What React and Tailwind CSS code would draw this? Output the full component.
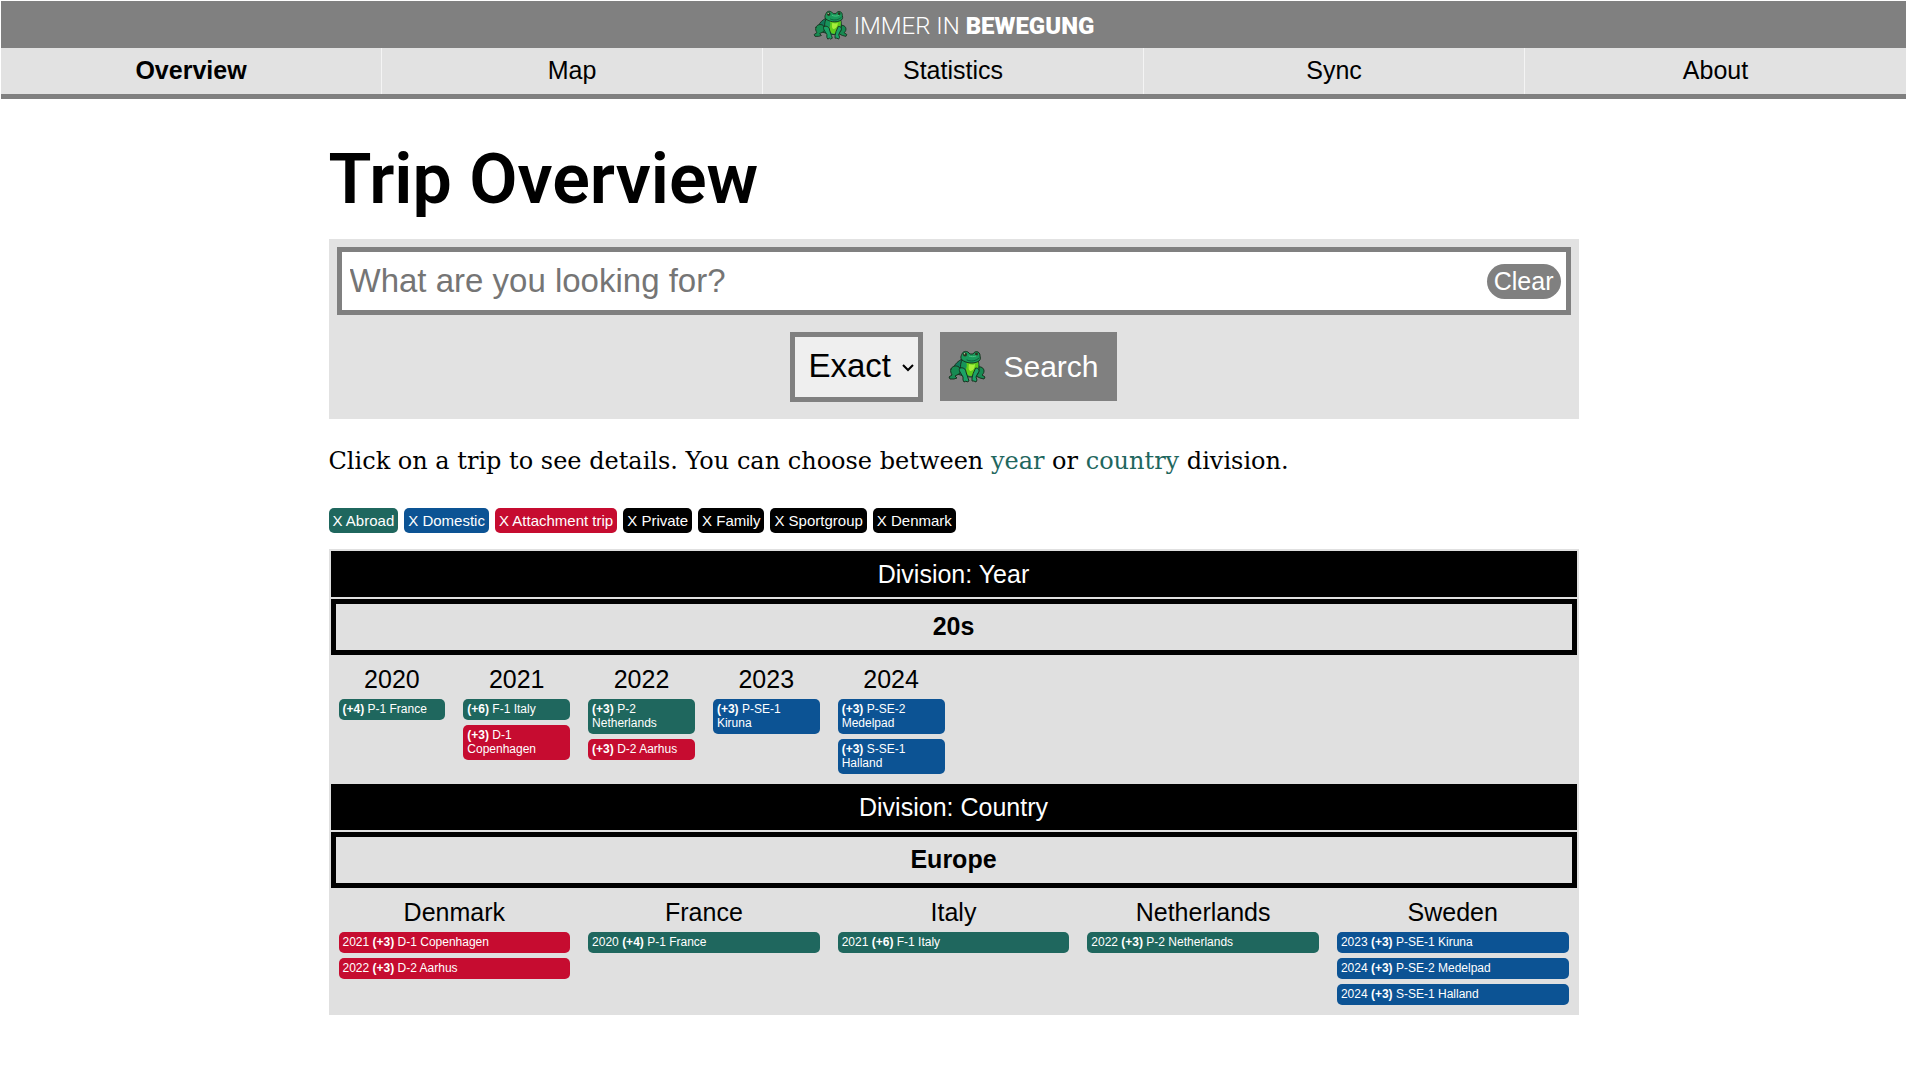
import React from "react";

const NAV = ["Overview", "Map", "Statistics", "Sync", "About"];

const TONES = {
  abroad: "bg-[#1f675e]",
  domestic: "bg-[#0c5394]",
  attachment: "bg-[#c60c30]",
  plain: "bg-black",
};

const FILTERS = [
  ["Abroad", "abroad"],
  ["Domestic", "domestic"],
  ["Attachment trip", "attachment"],
  ["Private", "plain"],
  ["Family", "plain"],
  ["Sportgroup", "plain"],
  ["Denmark", "plain"],
];

const YEARS = [
  { title: "2020", trips: [["", "(+4)", "P-1 France", "abroad"]] },
  {
    title: "2021",
    trips: [
      ["", "(+6)", "F-1 Italy", "abroad"],
      ["", "(+3)", "D-1 Copenhagen", "attachment"],
    ],
  },
  {
    title: "2022",
    trips: [
      ["", "(+3)", "P-2 Netherlands", "abroad"],
      ["", "(+3)", "D-2 Aarhus", "attachment"],
    ],
  },
  { title: "2023", trips: [["", "(+3)", "P-SE-1 Kiruna", "domestic"]] },
  {
    title: "2024",
    trips: [
      ["", "(+3)", "P-SE-2 Medelpad", "domestic"],
      ["", "(+3)", "S-SE-1 Halland", "domestic"],
    ],
  },
];

const COUNTRIES = [
  {
    title: "Denmark",
    trips: [
      ["2021", "(+3)", "D-1 Copenhagen", "attachment"],
      ["2022", "(+3)", "D-2 Aarhus", "attachment"],
    ],
  },
  { title: "France", trips: [["2020", "(+4)", "P-1 France", "abroad"]] },
  { title: "Italy", trips: [["2021", "(+6)", "F-1 Italy", "abroad"]] },
  { title: "Netherlands", trips: [["2022", "(+3)", "P-2 Netherlands", "abroad"]] },
  {
    title: "Sweden",
    trips: [
      ["2023", "(+3)", "P-SE-1 Kiruna", "domestic"],
      ["2024", "(+3)", "P-SE-2 Medelpad", "domestic"],
      ["2024", "(+3)", "S-SE-1 Halland", "domestic"],
    ],
  },
];

function Frog({ className }) {
  return (
    <svg viewBox="0 0 38 33" className={className} aria-hidden="true">
      <g stroke="#17331f" strokeWidth="1" strokeLinejoin="round" strokeLinecap="round">
        {/* back and hind legs */}
        <path fill="#117a5c" d="M14 9C10 11 7 14 6 17l3 7 7 2 4-6-2-9z" />
        <path fill="#178a52" d="M3 19c1-3 5-4 8-2 2 2 2 5 0 7l-4 2 2 2-3 1-4 0-1-2 3-2c-1-2-2-4-1-6z" />
        <path fill="#178a52" d="M29 17c4-1 7 1 7 4 0 2-1 3-2 4l3 2-1 2-4-1-4-2z" />
        {/* torso and belly */}
        <path fill="#17935a" d="M14 10c-2 4-2 9 0 13 2 3 5 4 9 4 5 0 8-3 8-8 0-3 0-6-1-9z" />
        <path
          fill="#5fcb1c"
          stroke="none"
          d="M18 12c4 1 9 1 12-1 1 4 0 8-2 11-1 3-3 4-6 4-3-1-5-3-4-7 1-3 1-5 0-7z"
        />
        <path fill="#a6ee3a" stroke="none" d="M21 14c2 1 5 1 6 0 0 3-1 6-4 7-2 0-3-2-2-7z" />
        {/* front legs */}
        <path fill="#1ba267" d="M12 18c3-1 6 1 6 4l2 6 1 3-2 1-1-1-2 1-1-2 0-3-3-5c-1-2-1-3 0-4z" />
        <path fill="#1ba267" d="M28 18c3 0 4 3 2 5l-2 4 1 3-1 2-2-1-2 0 0-3 1-4z" />
        {/* head */}
        <path
          fill="#1a9a5c"
          d="M14 10c-2-2-1-4 0-6 1-3 4-3 6-2l2 2h3c1-2 3-3 5-2 2 1 2 3 2 4 1 3 0 5-3 6-5 2-11 1-15-2z"
        />
      </g>
      <circle cx="17" cy="4.500" r="2" fill="#2c3320" />
      <circle cx="28.500" cy="4" r="1.500" fill="#2c3320" />
      <circle cx="16.500" cy="3.800" r="0.700" fill="#c6cfa8" />
      <path d="M19 10c4 2 9 1 12-2" fill="none" stroke="#0d5733" strokeWidth="0.900" strokeLinecap="round" />
      <path d="M21 6c2 1 5 1 7 0" fill="none" stroke="#4cc583" strokeWidth="1" strokeLinecap="round" />
    </svg>
  );
}

function Trip({ year, more, name, tone }) {
  return (
    <a
      href="#trip"
      className={`block rounded-[5px] px-1 pt-[3px] pb-1 text-[12px] leading-[14px] text-white ${TONES[tone]}`}
    >
      {year && `${year} `}
      <b>{more}</b> {name}
    </a>
  );
}

function Division({ title, group, columns, span }) {
  return (
    <section className="grid grid-cols-10 gap-[2px]">
      <h2 className="col-span-full bg-black py-2 text-center text-[25px] leading-[30px] text-white">
        Division: {title}
      </h2>
      <h3 className="col-span-full border-5 border-black pt-2 pb-2.5 text-center text-[25px] leading-[28px] font-bold">
        {group}
      </h3>
      {columns.map((column) => (
        <div key={column.title} className={`p-2 ${span}`}>
          <h4 className="mb-1.5 text-center text-[25px] leading-[28px]">{column.title}</h4>
          <div className="flex flex-col gap-[5px]">
            {column.trips.map(([year, more, name, tone]) => (
              <Trip key={year + name} year={year} more={more} name={name} tone={tone} />
            ))}
          </div>
        </div>
      ))}
    </section>
  );
}

export default function App() {
  return (
    <div className="bg-white pt-px pl-px font-['Liberation_Sans',Arial,sans-serif] text-black">
      <header>
        <div className="flex h-[47px] items-center justify-center gap-1.5 bg-[#808080] text-white">
          <Frog className="h-[30px] w-[35px]" />
          <div className="pt-0.5 font-[Roboto,sans-serif] text-[24px] font-light">
            IMMER IN <b className="font-black">BEWEGUNG</b>
          </div>
        </div>
        <nav className="grid grid-cols-5 border-b-5 border-[#808080] bg-[#e2e2e2] text-center text-[25px] leading-[30px]">
          {NAV.map((item, i) => (
            <a
              key={item}
              href={`#${item.toLowerCase()}`}
              className={`border-r border-[#f4f4f4] pt-[7px] pb-[9px] last:border-r-0 ${i === 0 ? "font-bold" : ""}`}
            >
              {item}
            </a>
          ))}
        </nav>
      </header>

      <main className="mx-auto max-w-[1250px]">
        <h1 className="pt-9 pb-4 font-[Roboto,sans-serif] text-[70px] leading-[88px] font-semibold">Trip Overview</h1>

        <form className="bg-[#e2e2e2] p-2 pb-[17px]" onSubmit={(e) => e.preventDefault()}>
          <div className="flex items-center border-5 border-[#808080] bg-white pr-[5px] pl-2">
            <input
              type="text"
              aria-label="Search trips"
              placeholder="What are you looking for?"
              className="h-[58px] min-w-0 flex-1 text-[33px] outline-none placeholder:text-[#757575]"
            />
            <button type="reset" className="h-[35px] rounded-full bg-[#808080] px-[7px] text-[25px] leading-[35px] text-white">
              Clear
            </button>
          </div>
          <div className="mt-[17px] flex items-start justify-center gap-[17px]">
            <div className="relative">
              <select
                aria-label="Match mode"
                className="block h-[70px] w-[133px] appearance-none border-5 border-[#808080] bg-[#efefef] pb-0.5 pl-[13px] text-[33px]"
              >
                <option>Exact</option>
                <option>Fuzzy</option>
              </select>
              <svg
                viewBox="0 0 12 8"
                className="pointer-events-none absolute top-8 right-[9px] h-2 w-3"
                fill="none"
                stroke="#000"
                strokeWidth="2"
                aria-hidden="true"
              >
                <path d="M1 1l5 5 5-5" />
              </svg>
            </div>
            <button type="submit" className="flex h-[69px] items-center gap-[17px] bg-[#808080] pr-[18px] pl-2 text-[30px] text-white">
              <Frog className="h-[33px] w-[38px]" />
              Search
            </button>
          </div>
        </form>

        <p className="pt-[26px] font-['DejaVu_Serif',serif] text-[24px] leading-[32px]">
          Click on a trip to see details. You can choose between{" "}
          <a href="#year" className="text-[#1f675e]">year</a> or{" "}
          <a href="#country" className="text-[#1f675e]">country</a> division.
        </p>

        <div className="mt-[31px] mb-4 flex flex-wrap gap-1.5">
          {FILTERS.map(([label, tone]) => (
            <button
              key={label}
              type="button"
              className={`h-[25px] rounded-[5px] px-1 text-[15px] leading-[25px] text-white ${TONES[tone]}`}
            >
              X {label}
            </button>
          ))}
        </div>

        <div className="flex flex-col gap-[2px] bg-[#e0e0e0] p-[2px]">
          <Division title="Year" group="20s" columns={YEARS} span="col-span-1" />
          <Division title="Country" group="Europe" columns={COUNTRIES} span="col-span-2" />
        </div>
      </main>
    </div>
  );
}
